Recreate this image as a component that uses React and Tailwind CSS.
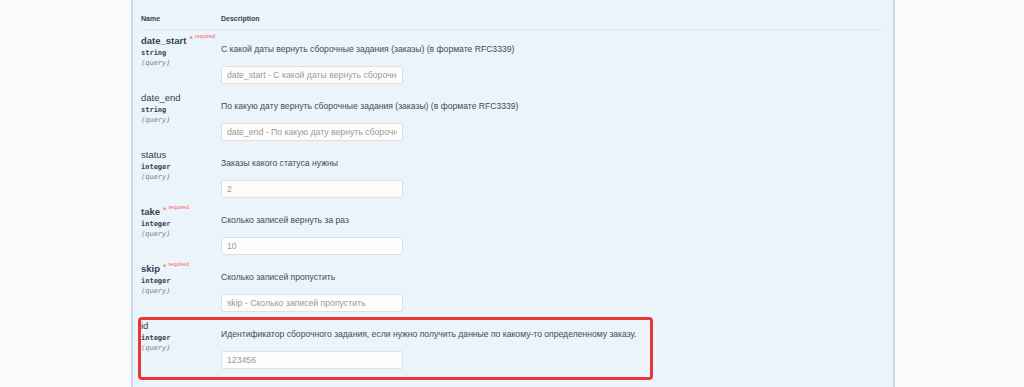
import React from "react";

const rows = [
  { name: "date_start", required: true, type: "string", desc: "С какой даты вернуть сборочные задания (заказы) (в формате RFC3339)", ph: "date_start - С какой даты вернуть сборочные задания (заказы) (в формате RFC3339)" },
  { name: "date_end", required: false, type: "string", desc: "По какую дату вернуть сборочные задания (заказы) (в формате RFC3339)", ph: "date_end - По какую дату вернуть сборочные задания (заказы) (в формате RFC3339)" },
  { name: "status", required: false, type: "integer", desc: "Заказы какого статуса нужны", ph: "2" },
  { name: "take", required: true, type: "integer", desc: "Сколько записей вернуть за раз", ph: "10" },
  { name: "skip", required: true, type: "integer", desc: "Сколько записей пропустить", ph: "skip - Сколько записей пропустить" },
  { name: "id", required: false, type: "integer", desc: "Идентификатор сборочного задания, если нужно получить данные по какому-то определенному заказу.", ph: "123456", highlight: true },
];

function Row({ r }) {
  return (
    <div className="relative flex h-[57px]">
      {r.highlight && (
        <div className="absolute left-[-3px] top-[2px] w-[515px] h-[63px] border-[3px] border-[#e53935] rounded-[4px] pointer-events-none" />
      )}
      <div className="w-[80px] shrink-0 pt-[5px]">
        <div className="flex items-start leading-[12px] h-[12px]">
          <span className={`text-[9.5px] leading-[12px] text-[#3b4151] ${r.required ? "font-bold" : ""}`}>{r.name}</span>
          {r.required && (
            <>
              <span className="text-[9px] text-[#ff5a5a] ml-[3px] leading-[9px]">*</span>
              <span className="text-[5.5px] text-[#ff5a5a] ml-[2px] leading-[6px] -mt-[2px]">required</span>
            </>
          )}
        </div>
        <div className="mt-[1px] text-[7px] leading-[10px] font-bold text-[#3b4151] font-['DejaVu_Sans_Mono',monospace]">{r.type}</div>
        <div className="text-[7px] leading-[10px] italic text-[#808080] font-['DejaVu_Sans_Mono',monospace]">(query)</div>
      </div>
      <div className="flex-1 pt-[13px]">
        <div className="text-[8.6px] leading-[12px] text-[#454b5a] whitespace-nowrap">{r.desc}</div>
        <input
          readOnly
          placeholder={r.ph}
          className="block mt-[11px] w-[182px] h-[18px] px-[5px] text-[8.7px] bg-[#fdfdfd] border border-[#e0e0e0] rounded-[2px] outline-none placeholder:text-[#9a9a9a] font-['Liberation_Sans',sans-serif]"
        />
      </div>
    </div>
  );
}

export default function App() {
  return (
    <div className="w-[1024px] h-[387px] bg-[#fafafa] overflow-hidden font-['Liberation_Sans',Arial,sans-serif]">
      <div className="ml-[131px] w-[764px] h-[387px] bg-[#ebf3fb] border-l-2 border-r-2 border-[#c5dcf3] pl-[8px] pr-[10px]">
        <div className="flex h-[30px] items-start pt-[14px] border-b border-[#dde5ee]">
          <div className="w-[80px] text-[7px] font-bold text-[#3b4151]">Name</div>
          <div className="text-[7px] font-bold text-[#3b4151]">Description</div>
        </div>
        {rows.map((r) => (
          <Row key={r.name} r={r} />
        ))}
      </div>
    </div>
  );
}
